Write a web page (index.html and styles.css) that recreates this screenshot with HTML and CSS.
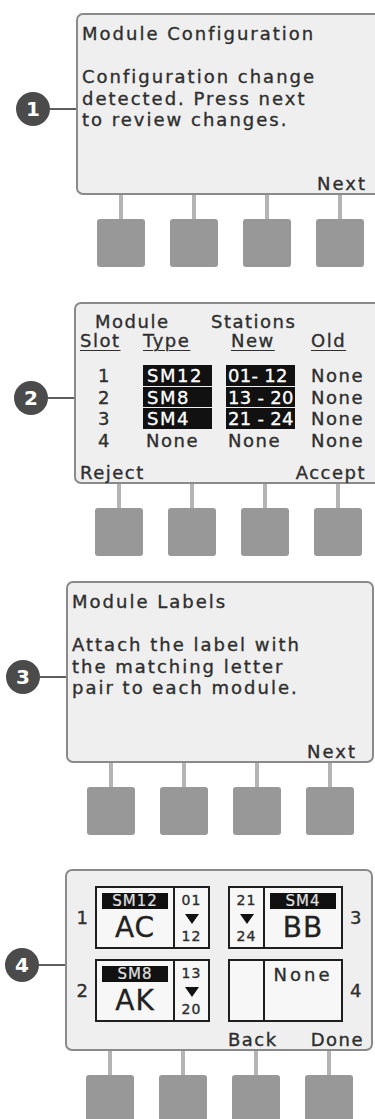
FILE: index.html
```html
<!DOCTYPE html>
<html lang="en">
<head>
	<meta charset="UTF-8">
	<title>Module Configuration</title>
	<link rel="stylesheet" href="styles.css">
</head>
<body>

	<!-- step 1 -->
	<section class="step step-a">
		<div class="face">
			<span class="badge">1</span><span class="lead"></span>
			<div class="screen">
				<p class="title">Module Configuration</p>
				<p class="body">Configuration change<br>detected. Press next<br>to review changes.</p>
				<div class="soft"><span>Next</span></div>
			</div>
		</div>
		<div class="keys"><div class="key"></div><div class="key"></div><div class="key"></div><div class="key"></div></div>
	</section>

	<!-- step 2 -->
	<section class="step step-b">
		<div class="face">
			<span class="badge">2</span><span class="lead"></span>
			<div class="screen table-screen">
				<div class="head">
					<div class="head-top"><span class="h-mod">Module</span><span>Stations</span></div>
					<div class="cols">
						<span><u>Slot</u></span>
						<span><u>Type</u></span>
						<span class="h-new"><u>New</u></span>
						<span><u>Old</u></span>
					</div>
				</div>
				<div class="rows">
					<span class="n">1</span><span class="hl">SM12</span><span class="hl hl-st">01- 12</span><span>None</span>
					<span class="n">2</span><span class="hl">SM8</span><span class="hl hl-st">13 - 20</span><span>None</span>
					<span class="n">3</span><span class="hl">SM4</span><span class="hl hl-st">21 - 24</span><span>None</span>
					<span class="n">4</span><span class="plain-t">None</span><span class="plain-s">None</span><span>None</span>
				</div>
				<div class="soft soft-split"><span>Reject</span><span>Accept</span></div>
			</div>
		</div>
		<div class="keys"><div class="key"></div><div class="key"></div><div class="key"></div><div class="key"></div></div>
	</section>

	<!-- step 3 -->
	<section class="step step-c">
		<div class="face">
			<span class="badge">3</span><span class="lead"></span>
			<div class="screen">
				<p class="title">Module Labels</p>
				<p class="body">Attach the label with<br>the matching letter<br>pair to each module.</p>
				<div class="soft"><span>Next</span></div>
			</div>
		</div>
		<div class="keys"><div class="key"></div><div class="key"></div><div class="key"></div><div class="key"></div></div>
	</section>

	<!-- step 4 -->
	<section class="step step-d">
		<div class="face">
			<span class="badge">4</span><span class="lead"></span>
			<div class="screen slot-screen">
				<div class="slots">
					<span class="num-l">1</span>
					<div class="cell">
						<div class="main"><span class="tag">SM12</span><span class="big">AC</span></div>
						<div class="side"><span>01</span><i class="tri"></i><span class="lo">12</span></div>
					</div>
					<span></span>
					<div class="cell">
						<div class="side side-l"><span>21</span><i class="tri"></i><span class="lo">24</span></div>
						<div class="main"><span class="tag">SM4</span><span class="big">BB</span></div>
					</div>
					<span class="num-r">3</span>

					<span class="num-l">2</span>
					<div class="cell">
						<div class="main"><span class="tag">SM8</span><span class="big">AK</span></div>
						<div class="side"><span>13</span><i class="tri"></i><span class="lo">20</span></div>
					</div>
					<span></span>
					<div class="cell">
						<div class="side side-l"></div>
						<div class="main"><span class="none">None</span></div>
					</div>
					<span class="num-r">4</span>
				</div>
				<div class="soft soft-end"><span>Back</span><span>Done</span></div>
			</div>
		</div>
		<div class="keys"><div class="key"></div><div class="key"></div><div class="key"></div><div class="key"></div></div>
	</section>

</body>
</html>
```

FILE: styles.css
```css
*{margin:0;padding:0;box-sizing:border-box}
html,body{background:#fff}
body{overflow-x:hidden;font-family:"DejaVu Sans",Verdana,sans-serif;font-size:18px;color:#2e2e2e;letter-spacing:2px;-webkit-text-stroke:.35px #2e2e2e}

/* each step: badge + screen, then soft keys */
.step-a{margin:13px 0 0 16px}
.step-b{margin:35px 0 0 14px}
.step-c{margin:25px 0 0 6px}
.step-d{margin:34px 0 0 5px}

.face{display:flex;align-items:flex-start}
.badge{width:34px;height:34px;margin-top:79px;border-radius:50%;background:#4b4b4b;color:#fff;-webkit-text-stroke:0;font-weight:bold;font-size:20px;letter-spacing:0;display:flex;align-items:center;justify-content:center;flex-shrink:0}
.lead{width:26px;height:2px;margin-top:95px;background:#5e5e5e;flex-shrink:0}

.screen{width:308px;height:182px;flex-shrink:0;border:2px solid #8a8a8a;border-radius:7px;background:#efefef;padding:8px 15px 0 4px;display:flex;flex-direction:column;line-height:21.5px}
.title{margin-bottom:21.5px}
.soft{margin-top:auto;display:flex;justify-content:flex-end;line-height:18px}

.keys{display:flex;gap:25px;padding-left:81px}
.key{width:48px}
.key::before{content:"";display:block;width:4px;height:24px;margin:0 auto;background:#b4b4b4}
.key::after{content:"";display:block;height:48px;border-radius:3px;background:#989898}

/* step 2 table */
.table-screen{letter-spacing:1.5px;padding-right:14px}
.head{line-height:19px}
.head-top{display:flex;padding-left:15px}
.h-mod{width:116px}
.cols,.rows{display:grid;grid-template-columns:63px 83px 85px auto}
.cols u{text-decoration:underline;text-decoration-thickness:1px;text-underline-offset:3px}
.h-new{padding-left:5px}
.rows{margin-top:15px;grid-auto-rows:21.5px}
.n{padding-left:18px}
.hl{display:block;width:69px;height:20.5px;line-height:21px;padding-left:4px;background:#111;color:#fff;-webkit-text-stroke:.3px #fff;white-space:nowrap;overflow:hidden}
.hl-st{padding-left:2px;letter-spacing:.3px}
.plain-t{padding-left:3px}
.plain-s{padding-left:2px}
.soft-split{justify-content:space-between}

/* step 4 slots */
.slot-screen{padding:15px 7px 0 0}
.slots{display:grid;grid-template-columns:28px 115px 18px 115px auto;grid-template-rows:63px 63px;row-gap:10px;align-items:center;letter-spacing:0}
.num-l{text-align:right;padding-right:7px}
.num-r{padding-left:7px}
.cell{display:flex;height:63px;border:2px solid #1e1e1e;background:#f7f7f7}
.main{flex:1;display:flex;flex-direction:column;align-items:stretch;text-align:center}
.tag{display:block;height:16px;margin:5px 5px 0;background:#111;color:#e0e0e0;-webkit-text-stroke:.2px #e0e0e0;font-size:15px;line-height:16px;letter-spacing:1px}
.big{margin-top:4px;font-size:28px;line-height:30px;letter-spacing:1px;color:#222;-webkit-text-stroke:.3px #222}
.side{width:35px;border-left:2px solid #1e1e1e;display:flex;flex-direction:column;align-items:center;font-size:14px;line-height:14px;letter-spacing:1px;padding-top:5px}
.side-l{border-left:0;border-right:2px solid #1e1e1e}
.tri{display:block;margin-top:7px;width:0;height:0;border-left:7px solid transparent;border-right:7px solid transparent;border-top:10px solid #111}
.lo{margin-top:5px}
.none{margin-top:3px;line-height:21px;letter-spacing:3px}
.soft-end{gap:33px;letter-spacing:1.5px}
```
